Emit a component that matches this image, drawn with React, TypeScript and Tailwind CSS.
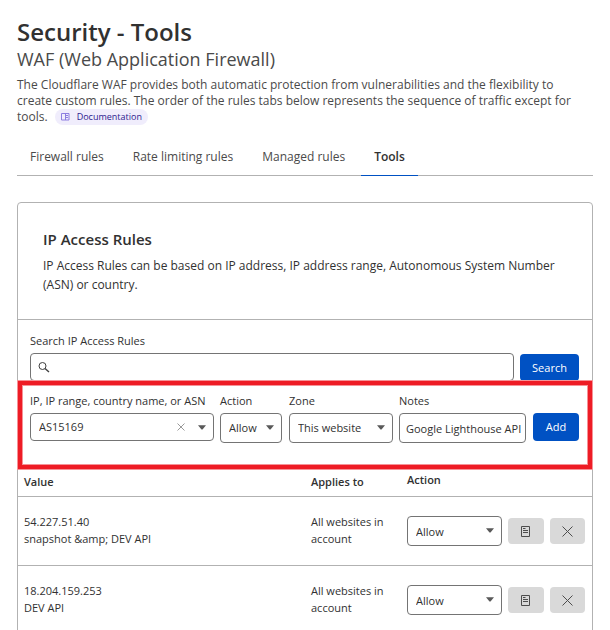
import { useState } from 'react';
import type { ReactNode } from 'react';

const tabs = ['Firewall rules', 'Rate limiting rules', 'Managed rules', 'Tools'];

const rules = [
  { value: '54.227.51.40', note: 'snapshot &amp; DEV API', scope: 'All websites in account' },
  { value: '18.204.159.253', note: 'DEV API', scope: 'All websites in account' },
];

const Caret = () => (
  <svg viewBox="0 0 8 5" className="w-2 h-[5px] shrink-0" fill="#595959" aria-hidden="true">
    <path d="M0 0.2h8L4.5 4.6h-1z" />
  </svg>
);

function Select({ id, label, options }: { id: string; label?: string; options: string[] }) {
  return (
    <div className="relative">
      <select
        id={id}
        aria-label={label}
        className="block w-full h-[30px] pl-2 pr-5 pt-px appearance-none rounded border border-[#747474] bg-white text-[11px] outline-none"
      >
        {options.map((o) => <option key={o}>{o}</option>)}
      </select>
      <span className="absolute right-2 top-3 pointer-events-none"><Caret /></span>
    </div>
  );
}

function IconButton({ title, children }: { title: string; children: ReactNode }) {
  return (
    <button title={title} className="flex-1 h-[26px] flex items-center justify-center rounded bg-[#d9d9d9] text-[#4d4d4d]">
      {children}
    </button>
  );
}

export default function App() {
  const [activeTab, setActiveTab] = useState('Tools');
  const [target, setTarget] = useState('AS15169');
  const [notes, setNotes] = useState('Google Lighthouse API');

  return (
    <main className="bg-white pt-[17px] pl-[17px] pr-[17px] text-[#313131] font-['Open_Sans','Noto_Sans',sans-serif]">
      <h1 className="text-[24px] leading-[30px] font-semibold">Security - Tools</h1>
      <h2 className="text-[18px] leading-[24px] text-[#4a4a4a]">WAF (Web Application Firewall)</h2>
      <p className="mt-[6px] pr-3 text-[12px] leading-[16px] text-[#4a4a4a]">
        The Cloudflare WAF provides both automatic protection from vulnerabilities and the flexibility to
        create custom rules. The order of the rules tabs below represents the sequence of traffic except for
        tools.
        <a href="#docs" className="inline-flex items-center gap-[7px] h-4 ml-[7px] px-[6px] rounded-full bg-[#f0edfc] text-[#2c1a8f] text-[9px] align-top">
          <svg viewBox="0 0 9 8" className="w-[9px] h-2" fill="none" stroke="#8d7fe0" aria-hidden="true">
            <path d="M.5.5h7.500v6.500H.5zM4.500.5v6.500" />
            <path d="M5 2.500h2M5 4.500h2" />
          </svg>
          Documentation
        </a>
      </p>

      <nav className="mt-3 flex gap-[3px] border-b border-[#b2b2b2] text-[12px]">
        {tabs.map((t) => (
          <button
            key={t}
            onClick={() => setActiveTab(t)}
            className={`-mb-px px-[13px] pt-[2px] h-[39px] border-b ${t === activeTab ? 'border-[#0051c3] font-semibold text-[#313131]' : 'border-transparent text-[#4a4a4a]'}`}
          >
            {t}
          </button>
        ))}
      </nav>

      <section className="mt-[26px] border border-[#b2b2b2] rounded">
        <div className="h-[117px] px-[25px] pt-[26px] border-b border-[#b2b2b2]">
          <h3 className="text-[15px] leading-[20px] font-semibold">IP Access Rules</h3>
          <p className="mt-[7px] text-[12px] leading-[19px]">
            IP Access Rules can be based on IP address, IP address range, Autonomous System Number (ASN) or country.
          </p>
        </div>

        {/* Search */}
        <form className="px-3 pt-3 text-[11px]" onSubmit={(e) => e.preventDefault()}>
          <label htmlFor="search" className="block leading-[18px]">Search IP Access Rules</label>
          <div className="mt-[3px] flex items-end gap-[6px] pr-px">
            <div className="flex-1 h-7 flex items-center pl-[7px] rounded border border-[#747474]">
              <svg viewBox="0 0 12 11" className="w-3 h-[11px]" fill="none" stroke="#404040" aria-hidden="true">
                <circle cx="4.500" cy="4" r="3.500" />
                <path d="M7 6.500l4 3.500" strokeWidth="1.400" />
              </svg>
              <input id="search" className="flex-1 min-w-0 px-2 outline-none" />
            </div>
            <button className="w-[59px] h-[27px] pt-px rounded bg-[#0051c3] text-white text-[11px]">Search</button>
          </div>
        </form>

        {/* New rule */}
        <form
          className="relative h-[88px] border-4 border-[#ee1c25] shadow-[0_0_0_1px_#f69297,inset_0_0_0_1px_#f69297] pl-2 pr-[9px] pt-[7px] flex items-start text-[11px]"
          onSubmit={(e) => e.preventDefault()}
        >
          <div className="flex-1 min-w-0 mr-[6px]">
            <label htmlFor="target" className="block leading-[18px] mb-[3px] whitespace-nowrap">IP, IP range, country name, or ASN</label>
            <div className="h-7 flex items-center pl-2 pr-[7px] rounded border border-[#747474]">
              <input id="target" value={target} onChange={(e) => setTarget(e.target.value)} className="flex-1 min-w-0 outline-none" />
              <button type="button" aria-label="Clear" onClick={() => setTarget('')} className="mr-[13px]">
                <svg viewBox="0 0 8 8" className="w-2 h-2" stroke="#999" fill="none"><path d="M.5.5l7 7M7.500.5l-7 7" /></svg>
              </button>
              <Caret />
            </div>
          </div>
          <div className="w-[62px] mr-[7px]">
            <label htmlFor="action" className="block leading-[18px] mb-[3px]">Action</label>
            <Select id="action" options={['Allow', 'Block']} />
          </div>
          <div className="w-[104px] mr-[6px]">
            <label htmlFor="zone" className="block leading-[18px] mb-[3px]">Zone</label>
            <Select id="zone" options={['This website', 'All websites in account']} />
          </div>
          <div className="w-[127px] mr-[7px]">
            <label htmlFor="notes" className="block leading-[18px] mb-[3px]">Notes</label>
            <input
              id="notes"
              value={notes}
              onChange={(e) => setNotes(e.target.value)}
              className="block w-full h-[30px] pl-[6px] pt-px rounded border border-[#747474] outline-none"
            />
          </div>
          <button className="mt-[21px] w-[46px] h-7 rounded bg-[#0051c3] text-white text-[11px]">Add</button>
        </form>

        <table className="w-full table-fixed border-separate border-spacing-0 text-left text-[11px] leading-[17px]">
          <thead>
            <tr>
              <th className="h-7 pl-[6px] pb-[2px] border-b border-[#b2b2b2] font-semibold">Value</th>
              <th className="w-24 pb-[2px] border-b border-[#b2b2b2] font-semibold">Applies to</th>
              <th className="w-[185px] pb-[6px] border-b border-[#b2b2b2] font-semibold">Action</th>
            </tr>
          </thead>
          <tbody>
            {rules.map((r) => (
              <tr key={r.value}>
                <td className="h-[69px] pl-[6px] pb-[2px] border-b border-[#b2b2b2]">
                  <div>{r.value}</div>
                  <div>{r.note}</div>
                </td>
                <td className="pr-4 pb-[2px] border-b border-[#b2b2b2]">{r.scope}</td>
                <td className="pr-[7px] border-b border-[#b2b2b2]">
                  <div className="flex items-center gap-[6px]">
                    <div className="w-[95px]">
                      <Select id={`action-${r.value}`} label={`Action for ${r.value}`} options={['Allow', 'Block']} />
                    </div>
                    <IconButton title="Edit notes">
                      <svg viewBox="0 0 9 11" className="w-[9px] h-[11px]" fill="none" stroke="currentColor">
                        <path d="M.5.5h8v10h-8zM2 2.500h2.500M2 4.500h5M2 6.500h5" />
                      </svg>
                    </IconButton>
                    <IconButton title="Delete">
                      <svg viewBox="0 0 11 11" className="w-[11px] h-[11px]" fill="none" stroke="currentColor">
                        <path d="M.5.5l10 10M10.500.5l-10 10" />
                      </svg>
                    </IconButton>
                  </div>
                </td>
              </tr>
            ))}
          </tbody>
        </table>
      </section>
    </main>
  );
}
